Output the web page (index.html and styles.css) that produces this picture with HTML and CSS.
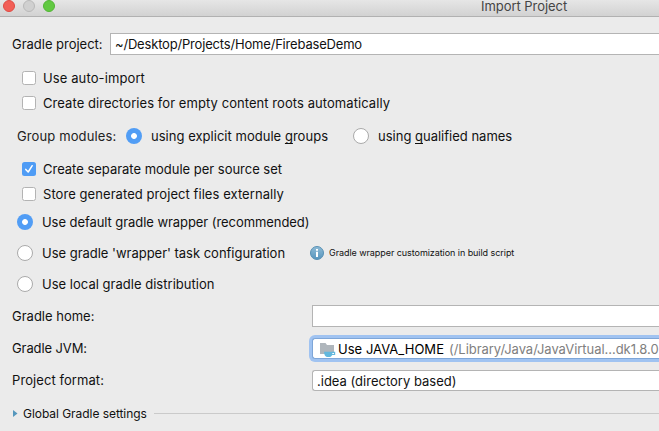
FILE: index.html
```html
<!DOCTYPE html>
<html lang="en">
<head>
<meta charset="utf-8">
<title>Import Project</title>
<link rel="stylesheet" href="styles.css">
</head>
<body>
<div class="window">
  <header class="titlebar">
    <div class="lights"><i class="light red"></i><i class="light gray"></i><i class="light green"></i></div>
    <span class="title">Import Project</span>
  </header>

  <div class="row project">
    <label class="t-project">Gradle project:</label>
    <div class="field"><span class="t-path">~/Desktop/Projects/Home/FirebaseDemo</span></div>
  </div>

  <div class="row check"><i class="box"></i><span class="t-auto">Use auto-import</span></div>
  <div class="row check"><i class="box"></i><span class="t-dirs">Create directories for empty content roots automatically</span></div>

  <div class="row group">
    <span class="group-label">Group modules:</span>
    <i class="radio on"></i><span class="group-explicit">using explicit module <u>g</u>roups</span>
    <i class="radio"></i><span>using <u>q</u>ualified names</span>
  </div>

  <div class="row check"><i class="box on"><svg viewBox="0 0 14 14"><path d="M3.8 7.4 L6.2 10 L10.2 3.7"/></svg></i><span class="t-separate">Create separate module per source set</span></div>
  <div class="row check"><i class="box"></i><span class="t-dirs">Store generated project files externally</span></div>

  <div class="row option"><i class="radio on"></i><span class="t-default">Use default gradle wrapper (recommended)</span></div>
  <div class="row option">
    <i class="radio"></i><span class="t-wrapper">Use gradle 'wrapper' task configuration</span>
    <svg class="info" viewBox="0 0 14 14">
      <defs><linearGradient id="infoFill" x1="0" y1="0" x2="0" y2="1"><stop offset="0" stop-color="#8fbbd6"/><stop offset="1" stop-color="#5795bd"/></linearGradient></defs>
      <circle cx="7" cy="7" r="6.5" fill="url(#infoFill)" stroke="#5890b4"/>
      <path d="M6 3h2v1.700H6zM6 5.800h2V11H6z" fill="#fff"/>
    </svg>
    <span class="hint">Gradle wrapper customization in build script</span>
  </div>
  <div class="row option"><i class="radio"></i><span class="t-local">Use local gradle distribution</span></div>

  <div class="row form first"><label>Gradle home:</label><div class="field"></div></div>
  <div class="row form">
    <label class="t-jvm">Gradle JVM:</label>
    <div class="field combo focused">
      <svg class="folder" viewBox="0 0 16 14">
        <path d="M0 0h5.500l1.500 2h7v9H0z" fill="#afb6bc"/>
        <path d="M4 8.800h11.200v3.200h-3c-.6 1-1.200 1.500-2 2H7c-1.500-.4-3-2-3-5.200z" fill="#62b8de"/>
        <path d="M12.300 9.900h1.700v1h-1.700z" fill="#fff"/>
      </svg>
      <span class="jvm">Use JAVA_HOME</span><span class="jvm-path">(/Library/Java/JavaVirtual...dk1.8.0</span>
    </div>
  </div>
  <div class="row form"><label class="t-format">Project format:</label><div class="field combo"><span>.idea (directory based)</span></div></div>

  <div class="row section">
    <svg class="arrow" viewBox="0 0 5 7"><path d="M0 0 L4.500 3.500 L0 7z"/></svg>
    <span>Global Gradle settings</span>
    <i class="rule"></i>
  </div>
</div>
</body>
</html>
```
FILE: styles.css
```css
* { box-sizing: border-box; }
body { margin: 0; background: #ebebeb; color: #111; font: 13px/16px Inter, "Liberation Sans", sans-serif; }
.window { width: 659px; height: 431px; overflow: hidden; background: #ebebeb; }
i { display: block; flex: none; }
span, label { flex: none; white-space: nowrap; }
u { text-decoration: underline; text-decoration-thickness: 1px; text-underline-offset: 2px; text-decoration-skip-ink: none; }

.titlebar { display: flex; height: 17px; border-bottom: 1px solid #b1b1b1; background: linear-gradient(#e6e6e6, #d2d2d2); }
.lights { display: flex; gap: 8px; width: 481px; padding-left: 3px; }
.light { width: 12px; height: 12px; border-radius: 50%; border: 1px solid; }
.red { background: #f25f57; border-color: #df4a43; }
.gray { background: #d0d0d0; border-color: #b9b9b9; }
.green { background: #62c942; border-color: #52b536; }
.title { color: #454545; line-height: 13px; letter-spacing: -.05px; }

.row { display: flex; align-items: center; height: 25px; }
.project { height: 22px; margin: 16px 0 10px; padding-left: 12px; }
.project label { width: 98px; }
.field { display: flex; align-items: center; flex: 1; height: 22px; padding-left: 4px; border: 1px solid #b4b4b4; border-right: 0; background: #fff; }

.check { padding-left: 22px; }
.box { width: 14px; height: 14px; margin-right: 7px; border: 1px solid #b3b3b3; border-radius: 2.5px; background: #fff; }
.box.on { border: 0; background: #4f9cf5; }
.box svg { display: block; width: 14px; height: 14px; fill: none; stroke: #fff; stroke-width: 1.5; stroke-linecap: round; stroke-linejoin: round; }

.radio { width: 16px; height: 16px; border: 1px solid #aaa; border-radius: 50%; background: #fff; }
.radio.on { border: 0; background: radial-gradient(circle, #fff 2.5px, #519df5 3.3px); }
.group { height: 40px; margin-top: 1px; padding-left: 17px; }
.group-label { width: 109px; letter-spacing: .12px; color: #222; }
.group .radio { margin-right: 9px; }
.group-explicit { width: 202px; letter-spacing: .025px; }

.option { height: 31px; padding-left: 17px; }
.option .radio { margin-right: 9px; }
.info { width: 14px; height: 14px; margin: 0 5px 0 25px; }
.hint { font-size: 9px; letter-spacing: -.06px; }

.form { height: 32px; padding-left: 12px; }
.form.first { margin-top: 1px; }
.form label { width: 300px; }
.combo { height: 21px; margin-top: 1px; border-radius: 3px 0 0 3px; }
.focused { border-color: #7ea6d8; box-shadow: 0 0 0 3px #a0c3f1; padding-left: 7px; }
.folder { width: 16px; height: 14px; margin: 3px 2px 0 0; }
.jvm { width: 111px; color: #000; letter-spacing: .03px; }
.jvm-path { color: #808080; letter-spacing: -.04px; }

.section { height: 35px; padding-left: 13px; font-size: 12px; letter-spacing: -.05px; }
.arrow { width: 5px; height: 7px; margin-right: 5px; fill: #5597bd; }
.rule { flex: 1; height: 1px; margin-left: 7px; background: #cacaca; }

.t-project { letter-spacing: -.02px; }
.t-path { letter-spacing: -.183px; }
.t-auto { letter-spacing: .11px; }
.t-dirs { letter-spacing: .065px; }
.t-separate { letter-spacing: -.016px; }
.t-default { letter-spacing: -.065px; }
.t-wrapper { width: 243px; letter-spacing: -.02px; }
.t-local { letter-spacing: .02px; }
.t-jvm { letter-spacing: -.1px; }
.t-format { letter-spacing: .076px; }
```
